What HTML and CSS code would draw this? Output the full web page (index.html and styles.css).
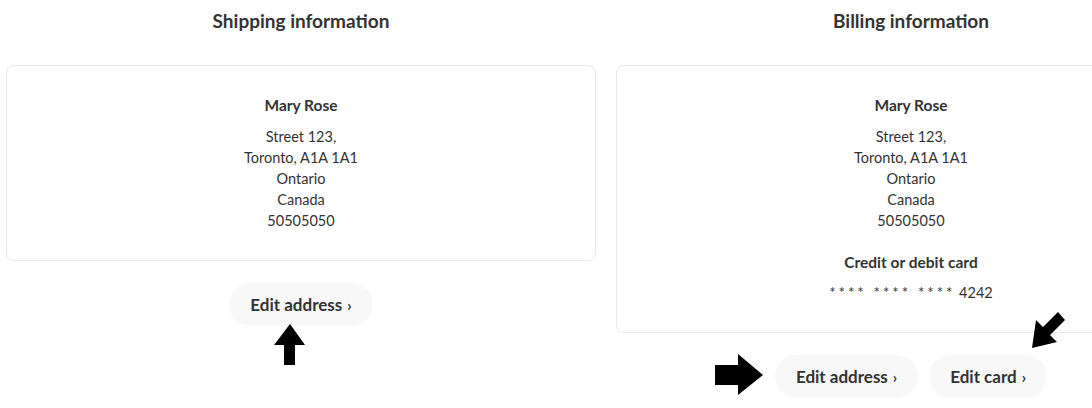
FILE: index.html
```html
<!DOCTYPE html>
<html lang="en">
	<head>
		<meta charset="UTF-8" />
		<meta name="viewport" content="width=device-width, initial-scale=1.0" />
		<title>Checkout</title>
		<link rel="stylesheet" href="styles.css">
	</head>
	<body>
		<div class="page">
			<section class="col">
				<h2 class="col-title">Shipping information</h2>
				<div class="card">
					<p class="name">Mary Rose</p>
					<p class="line">Street 123,</p>
					<p class="line">Toronto, A1A 1A1</p>
					<p class="line">Ontario</p>
					<p class="line">Canada</p>
					<p class="line">50505050</p>
				</div>
				<div class="actions">
					<a class="btn" href="javascript:;">Edit address <span class="chev">›</span></a>
				</div>
				<!-- annotation arrow -->
				<svg class="arrow arrow-up" width="32" height="42" viewBox="0 0 32 42">
					<polygon points="16,0 31,21 21,21 21,41 10,41 10,21 0,21" fill="#000" />
				</svg>
			</section>
			<section class="col">
				<h2 class="col-title">Billing information</h2>
				<div class="card">
					<p class="name">Mary Rose</p>
					<p class="line">Street 123,</p>
					<p class="line">Toronto, A1A 1A1</p>
					<p class="line">Ontario</p>
					<p class="line">Canada</p>
					<p class="line">50505050</p>
					<p class="name sub">Credit or debit card</p>
					<p class="line"><span class="stars">**** **** ****</span> 4242</p>
				</div>
				<div class="actions">
					<a class="btn" href="javascript:;">Edit address <span class="chev">›</span></a>
					<a class="btn" href="javascript:;">Edit card <span class="chev">›</span></a>
				</div>
				<svg class="arrow arrow-right" width="49" height="42" viewBox="0 0 49 42">
					<polygon points="48,21 23,0 23,11 0,11 0,31 23,31 23,41" fill="#000" />
				</svg>
				<svg class="arrow arrow-diag" width="36" height="40" viewBox="0 0 36 40">
					<polygon points="2,38 6,10 13,17 28,2 35,10 20,25 27,32" fill="#000" />
				</svg>
			</section>
		</div>
	</body>
</html>
```

FILE: styles.css
```css
* {
	margin: 0;
	padding: 0;
	box-sizing: border-box;
}
body {
	font-family: "Lato", "Noto Sans", sans-serif;
	color: #333;
	background: #fff;
	overflow: hidden;
}
.page {
	display: grid;
	grid-template-columns: 590px 590px;
	column-gap: 20px;
	padding: 0 6px;
	width: 1220px;
}
.col {
	position: relative;
}
.col-title {
	font-size: 19px;
	font-weight: 700;
	text-align: center;
	line-height: 22px;
	padding-top: 10px;
	height: 65px;
}
.card {
	border: 1px solid #e8e8e8;
	border-radius: 8px;
	padding: 29px 10px 29px;
	text-align: center;
}
.name {
	font-size: 15.5px;
	font-weight: 700;
	line-height: 21px;
	margin-bottom: 10px;
}
.name.sub {
	margin-top: 21px;
	margin-bottom: 9px;
}
.line {
	font-size: 14.5px;
	line-height: 21px;
}
.stars {
	font-size: 15px;
	letter-spacing: 3px;
}
.actions {
	display: flex;
	justify-content: center;
	gap: 11px;
	padding-top: 22px;
}
.btn {
	display: inline-flex;
	align-items: center;
	height: 43px;
	padding: 0 21px;
	border-radius: 22px;
	background-color: #f8f8f8;
	color: #333;
	font-size: 17px;
	font-weight: 700;
	text-decoration: none;
}
.chev {
	margin-left: 5px;
	font-size: 15px;
}
.arrow {
	position: absolute;
}
.arrow-up {
	left: 268px;
	top: 324px;
}
.arrow-right {
	left: 99px;
	top: 354px;
}
.arrow-diag {
	left: 414px;
	top: 310px;
}
```
